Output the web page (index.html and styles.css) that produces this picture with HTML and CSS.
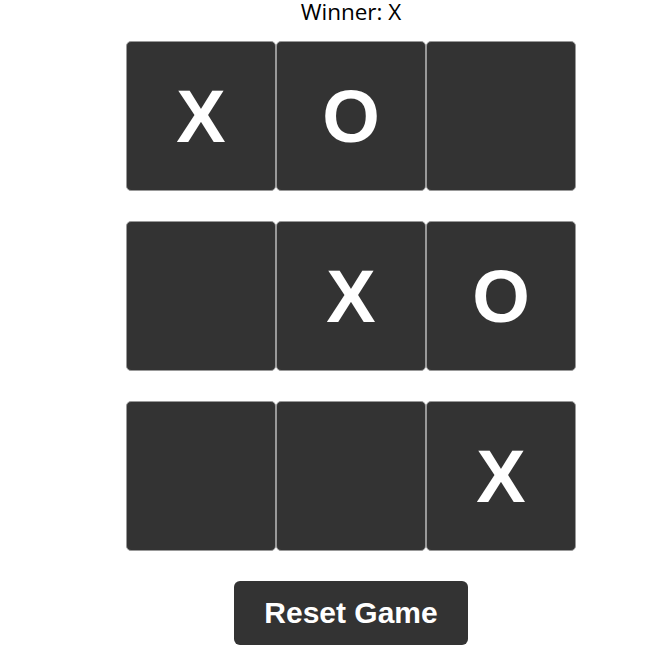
FILE: index.html
```html
<!DOCTYPE html>
<html>
<head>
<meta charset="utf-8">
<link rel="stylesheet" href="styles.css">
</head>
<body>
<div class="app">
  <div class="status">Winner: X</div>
  <div class="board">
    <button class="cell">X</button>
    <button class="cell">O</button>
    <button class="cell"></button>
    <button class="cell"></button>
    <button class="cell">X</button>
    <button class="cell">O</button>
    <button class="cell"></button>
    <button class="cell"></button>
    <button class="cell">X</button>
  </div>
  <button class="reset">Reset Game</button>
</div>
</body>
</html>
```
FILE: styles.css
```css
html, body {
  margin: 0;
  padding: 0;
  background: #fff;
}
.app {
  width: 702px;
  display: flex;
  flex-direction: column;
  align-items: center;
}
.status {
  font-family: "Open Sans", "Noto Sans", sans-serif;
  font-size: 22.5px;
  line-height: 23px;
  color: #000;
  height: 41px;
}
.board {
  display: grid;
  grid-template-columns: repeat(3, 150px);
  grid-auto-rows: 150px;
  row-gap: 30px;
}
.cell {
  box-sizing: border-box;
  width: 150px;
  height: 150px;
  margin: 0;
  padding: 0;
  background: #333;
  border: 1px solid #999;
  border-radius: 5px;
  color: #fff;
  font-family: "Liberation Sans", Arial, sans-serif;
  font-weight: bold;
  font-size: 74px;
  display: flex;
  align-items: center;
  justify-content: center;
}
.reset {
  margin-top: 30px;
  width: 234px;
  height: 64px;
  background: #333;
  color: #fff;
  border: none;
  border-radius: 6px;
  font-family: "Liberation Sans", Arial, sans-serif;
  font-weight: bold;
  font-size: 30px;
  padding: 0;
}
```
